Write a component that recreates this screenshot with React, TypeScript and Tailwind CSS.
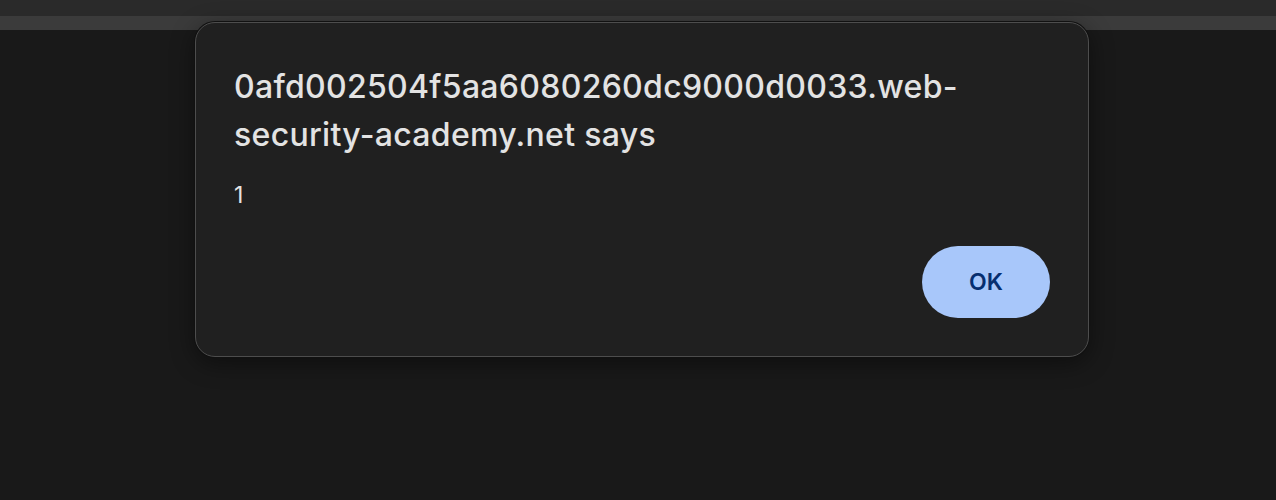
export default function App() {
  return (
    <div className="relative h-[500px] w-full overflow-hidden bg-[#191919] font-['Inter',sans-serif]">
      {/* browser chrome strip */}
      <div className="h-[16px] bg-[#2a2a2a]" />
      <div className="h-[14px] bg-[#3b3b3b]" />

      {/* alert dialog */}
      <div className="absolute left-[195px] top-[22px] w-[894px] rounded-[20px] border border-[#4d4d4d] bg-[#202020] px-[38px] pb-[38px] pt-[40px] shadow-[0_0_0_1px_#111,0_6px_24px_rgba(0,0,0,0.45)]">
        <h2 className="text-[32px] font-medium leading-[48px] tracking-[0.3px] text-[#e3e3e3]">
          0afd002504f5aa6080260dc9000d0033.web-
          <br />
          security-academy.net says
        </h2>
        <p className="mt-[20px] text-[23px] leading-[32px] text-[#e3e3e3]">1</p>
        <div className="mt-[35px] flex justify-end">
          <button className="h-[72px] w-[128px] rounded-full bg-[#a8c7fa] text-[23px] font-semibold text-[#062e6f]">
            OK
          </button>
        </div>
      </div>
    </div>
  )
}
